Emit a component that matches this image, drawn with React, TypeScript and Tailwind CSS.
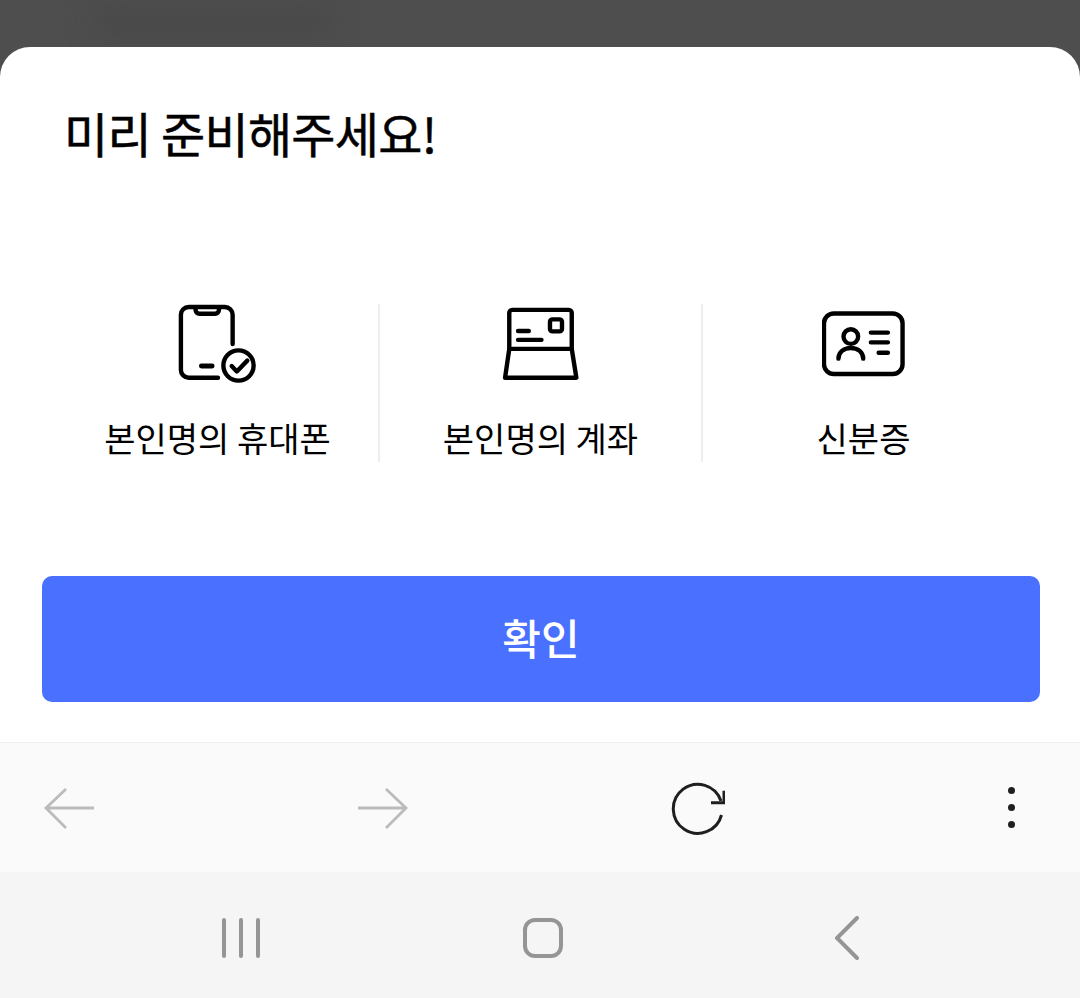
const KR = "font-['Noto_Sans_CJK_KR','Noto_Sans',sans-serif]";

function PhoneCheckIcon() {
  return (
    <svg width="84" height="84" viewBox="0 0 84 84" fill="none" stroke="#000" strokeWidth="4.5" strokeLinecap="round" strokeLinejoin="round">
      <path d="M42 75.500H12a8 8 0 0 1-8-8V11a8 8 0 0 1 8-8h37a8 8 0 0 1 8 8v30" />
      <path d="M19 4v2a4 4 0 0 0 4 4h16a4 4 0 0 0 4-4V4" />
      <path d="M25 63.500h11" strokeWidth="5" />
      <circle cx="63" cy="63" r="15.500" />
      <path d="M56 63.500l5.300 5.600L72 58" />
    </svg>
  );
}

function BankbookIcon() {
  return (
    <svg width="84" height="84" viewBox="0 0 84 84" fill="none" stroke="#000" strokeWidth="4.5" strokeLinecap="round" strokeLinejoin="round">
      <path d="M9.500 46V9a3 3 0 0 1 3-3h58a3 3 0 0 1 3 3v37" />
      <path d="M9.500 46h64l4.700 29.500H5.200z" />
      <rect x="51.200" y="15.700" width="12.300" height="12.300" rx="2.500" />
      <path d="M18.500 27.700h11M18.500 36.700h24" />
    </svg>
  );
}

function IdCardIcon() {
  return (
    <svg width="84" height="84" viewBox="0 0 84 84" fill="none" stroke="#000" strokeWidth="4.500" strokeLinecap="round" strokeLinejoin="round">
      <rect x="1" y="9.700" width="80.500" height="62" rx="10" />
      <circle cx="28.500" cy="33.300" r="7.500" />
      <path d="M15.800 56c0-6.500 5.500-11 12.700-11s12.700 4.500 12.700 11" />
      <path d="M49 29.300h17.500M49 39.300h17.500M57 50h9.500" />
    </svg>
  );
}

const items = [
  { label: "본인명의 휴대폰", icon: <PhoneCheckIcon /> },
  { label: "본인명의 계좌", icon: <BankbookIcon /> },
  { label: "신분증", icon: <IdCardIcon /> },
];

function Arrow({ flip }: { flip?: boolean }) {
  return (
    <svg width="50" height="44" viewBox="0 0 50 44" fill="none" stroke="#bbbbbb" strokeWidth="2.800" className={flip ? "-scale-x-100" : ""}>
      <path d="M22 3 2 22l20 20M2 22h48" />
    </svg>
  );
}

export default function App() {
  return (
    <div className={`${KR} flex h-[998px] w-[1080px] flex-col overflow-hidden bg-[#4e4e4e]`}>
      {/* dimmed page behind the sheet */}
      <div className="h-[47px] shrink-0 overflow-hidden pl-[95px] pt-[6px]">
        <div className="h-[32px] w-[235px] bg-[#494949] blur-md" />
      </div>

      <section className="flex h-[695px] shrink-0 flex-col rounded-t-[30px] bg-white">
        <h1 className="pl-[64px] pt-[51px] text-[48px] leading-[68px] tracking-[-0.7px] text-black [-webkit-text-stroke:0.5px_black]">미리 준비해주세요!</h1>

        <ul className="mt-[138px] flex pl-[57px] pr-[56px]">
          {items.map((item, i) => (
            <li key={item.label} className={`flex h-[158px] flex-1 flex-col items-center ${i < 2 ? "border-r-2 border-[#eeeeee]" : ""}`}>
              {item.icon}
              <span className="mt-[28px] text-[34px] leading-[48px] text-black">{item.label}</span>
            </li>
          ))}
        </ul>

        <button className="ml-[42px] mr-[40px] mt-[114px] flex h-[126px] items-center justify-center rounded-[10px] bg-[#4a70ff] pb-[6px] text-[42px] font-medium text-white">확인</button>
      </section>

      {/* browser toolbar */}
      <div className="flex h-[130px] shrink-0 items-center justify-between border-t border-[#efefef] bg-[#fafafa] pl-[44px] pr-[43px]">
        <Arrow />
        <Arrow flip />
        <div className="flex w-[50px] justify-center">
          <svg width="54" height="54" viewBox="0 0 54 54" fill="none" stroke="#1f1f1f" strokeWidth="3" className="shrink-0">
            <path d="M50.500 34a24.500 24.500 0 1 1-.5-14" />
            <path d="M40 21.700h13V9.700" />
          </svg>
        </div>
        <div className="flex w-[50px] flex-col items-center gap-[10px]">
          <span className="size-[7px] rounded-full bg-[#1f1f1f]" />
          <span className="size-[7px] rounded-full bg-[#1f1f1f]" />
          <span className="size-[7px] rounded-full bg-[#1f1f1f]" />
        </div>
      </div>

      {/* android nav bar */}
      <div className="flex h-[126px] shrink-0 items-center bg-[#f5f5f5] pl-[222px] pt-[6px]">
        <svg width="38" height="40" viewBox="0 0 38 40" stroke="#959595" strokeWidth="4" strokeLinecap="round">
          <path d="M2 2v36M19 2v36M36 2v36" />
        </svg>
        <div className="ml-[263px] size-[40px] rounded-[12px] border-4 border-[#959595]" />
        <svg width="24" height="44" viewBox="0 0 24 44" fill="none" stroke="#959595" strokeWidth="4" strokeLinecap="round" className="ml-[272px]">
          <path d="M22 2 2 22l20 20" />
        </svg>
      </div>
    </div>
  );
}
